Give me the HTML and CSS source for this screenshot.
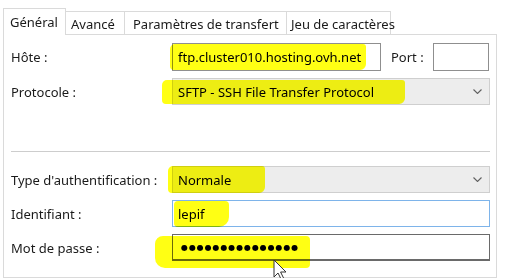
FILE: index.html
```html
<!DOCTYPE html>
<html lang="fr">
<head>
    <meta charset="UTF-8">
    <title>Paramètres du site</title>
    <link rel="stylesheet" href="styles.css">
</head>
<body>

<div class="dialog">
    <div class="tabs">
        <div class="tab active">Général</div>
        <div class="tab tab-avance">Avancé</div>
        <div class="tab tab-transfert">Paramètres de transfert</div>
        <div class="tab tab-charset">Jeu de caractères</div>
    </div>

    <div class="panel">
        <div class="group">
            <div class="row row-host">
                <label class="lbl">Hôte :</label>
                <div class="hostline">
                    <div class="field field-host">ftp.cluster010.hosting.ovh.net</div>
                    <label class="lbl-port">Port :</label>
                    <div class="field field-port"></div>
                </div>
                <span class="mark mark-host"></span>
            </div>
            <div class="row">
                <label class="lbl">Protocole :</label>
                <div class="field combo">
                    <span>SFTP - SSH File Transfer Protocol</span>
                    <svg class="chevron" width="9" height="5" viewBox="0 0 9 5"><polyline points="0.5,0.5 4.5,4.5 8.5,0.5" fill="none" stroke="#606060" stroke-width="1.1"/></svg>
                </div>
                <span class="mark mark-proto"></span>
            </div>
        </div>

        <div class="sep"></div>

        <div class="group">
            <div class="row">
                <label class="lbl">Type d'authentification :</label>
                <div class="field combo">
                    <span>Normale</span>
                    <svg class="chevron" width="9" height="5" viewBox="0 0 9 5"><polyline points="0.5,0.5 4.5,4.5 8.5,0.5" fill="none" stroke="#606060" stroke-width="1.1"/></svg>
                </div>
                <span class="mark mark-type"></span>
            </div>
            <div class="row">
                <label class="lbl">Identifiant :</label>
                <div class="field field-focus">lepif</div>
                <span class="mark mark-user"></span>
            </div>
            <div class="row">
                <label class="lbl">Mot de passe :</label>
                <div class="field field-pass"><span class="dots">●●●●●●●●●●●●●●●</span></div>
                <span class="mark mark-pass"></span>
                <svg class="cursor" width="16" height="22" viewBox="0 0 16 22">
                    <path d="M1 1 L1 18 L5 14 L8.5 21 L11 20 L7.6 13 L13 13 Z" fill="#fff" stroke="#333" stroke-width="1" stroke-linejoin="round"/>
                </svg>
            </div>
        </div>
    </div>
</div>

</body>
</html>
```

FILE: styles.css
```css
body {
    margin: 0;
    background-color: #fff;
    font-family: 'Noto Sans', 'Open Sans', sans-serif;
    font-size: 13px;
    color: #1a1a1a;
}
.dialog {
    padding: 8px 0 0 3px;
    width: 494px;
}
.tabs {
    display: flex;
    align-items: flex-end;
    height: 26px;
    position: relative;
    z-index: 1;
}
.tab {
    height: 23px;
    line-height: 25px;
    padding: 0 5px;
    border: 1px solid #dadada;
    border-bottom: none;
    border-left: none;
    background-color: #fff;
    box-sizing: border-box;
    white-space: nowrap;
}
.tab.active {
    height: 27px;
    width: 63px;
    margin-bottom: -1px;
    border-left: 1px solid #dadada;
    line-height: 26px;
    padding: 0 0 4px 6px;
}
.tab-avance { width: 59px; }
.tab-transfert { width: 162px; padding-left: 8px; }
.tab-charset { width: 104px; padding-left: 4px; }

.panel {
    border: 1px solid #dadada;
    padding: 8px 6px 30px 7px;
    height: 244px;
    box-sizing: border-box;
}
.group {
    display: flex;
    flex-direction: column;
    gap: 7px;
}
.row {
    display: grid;
    grid-template-columns: 161px 1fr;
    align-items: center;
    position: relative;
    height: 27px;
}
.row-host {
    height: 28px;
}
.lbl {
    color: #1a1a1a;
}
.hostline {
    display: flex;
    align-items: center;
    height: 100%;
}
.field {
    height: 100%;
    box-sizing: border-box;
    border: 1px solid #a6a6a6;
    background-color: #fff;
    color: #000;
    padding: 0 5px;
    display: flex;
    align-items: center;
    white-space: nowrap;
}
.field-host {
    width: 209px;
    border-color: #8f8f8f;
}
.lbl-port {
    margin-left: 10px;
    width: 42px;
}
.field-port {
    width: 56px;
    border-color: #8f8f8f;
}
.combo {
    background-color: #ededed;
    border-color: #cfcfcf;
    justify-content: space-between;
    padding-right: 7px;
}
.field-focus {
    border-color: #7eb4ea;
}
.field-pass {
    border-color: #6a6a6a;
    border-bottom-width: 2px;
}
.dots {
    font-family: 'DejaVu Sans', sans-serif;
    font-size: 8px;
    letter-spacing: 0.9px;
    color: #000;
    padding-left: 3px;
}
.sep {
    height: 1px;
    background-color: #cdcdcd;
    margin: 46px 0 14px 0;
}

/* surligneur jaune posé par-dessus la capture */
.mark {
    position: absolute;
    background-color: #ffff14;
    mix-blend-mode: multiply;
    border-radius: 5px 3px 6px 4px;
    pointer-events: none;
    filter: blur(0.6px);
}
.mark-host { left: 159px; top: 1px; width: 196px; height: 26px; }
.mark-proto { left: 151px; top: 2px; width: 243px; height: 24px; }
.mark-type { left: 157px; top: 0; width: 97px; height: 27px; }
.mark-user { left: 163px; top: 1px; width: 55px; height: 26px; border-radius: 4px 4px 10px 4px; }
.mark-pass { left: 144px; top: 2px; width: 155px; height: 32px; border-radius: 8px 4px 4px 10px; }
.cursor {
    position: absolute;
    left: 262px;
    top: 25px;
}
```
